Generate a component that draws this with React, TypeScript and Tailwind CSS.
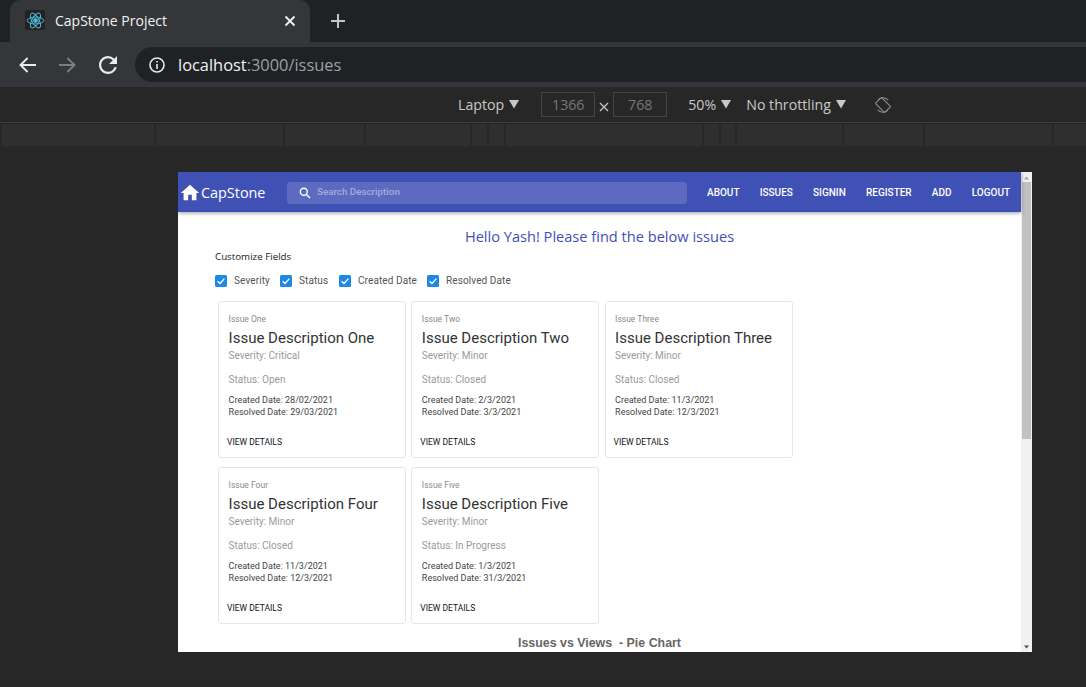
import React from "react";

const roboto = { fontFamily: "Roboto, sans-serif" };

function Cb({ label, w }: { label: string; w: string }) {
  return (
    <div className={`flex items-center ${w}`}>
      <svg width="12" height="12" viewBox="0 0 12 12" className="shrink-0">
        <rect width="12" height="12" rx="1.5" fill="#1e88e5" />
        <path d="M2.6 6.2 L5 8.5 L9.4 3.6" fill="none" stroke="#fff" strokeWidth="1.3" />
      </svg>
      <span className="ml-[7px] text-[10px] leading-[12px] text-[#555] tracking-[0.1px]">{label}</span>
    </div>
  );
}

function Tri({ cls }: { cls: string }) {
  return (
    <svg width="10" height="10" viewBox="0 0 10 10" className={cls}>
      <path d="M0 1 H10 L5 9.5 Z" fill="#c8c8c8" />
    </svg>
  );
}

type Issue = { t: string; d: string; sev: string; st: string; c: string; r: string };

function Card({ i }: { i: Issue }) {
  return (
    <div className="w-[188px] h-[157px] rounded-[3px] border border-[#e6e6e6] bg-white flex flex-col pl-[9.6px] pt-[12px]">
      <div className="text-[8.5px] leading-[11px] text-[#8a8a8a]">{i.t}</div>
      <div className="text-[15px] leading-[20px] mt-[3px] text-[#333]">{i.d}</div>
      <div className="text-[10px] leading-[14px] mt-[1px] text-[#9a9a9a]">{i.sev}</div>
      <div className="text-[10px] leading-[14px] mt-[10px] text-[#9a9a9a]">{i.st}</div>
      <div className="text-[9px] leading-[12px] mt-[7px] text-[#444]">{i.c}</div>
      <div className="text-[9px] leading-[12px] text-[#444]">{i.r}</div>
      <div className="text-[8.5px] leading-[11px] mt-[19px] -ml-[1.6px] font-normal text-[#111]">VIEW DETAILS</div>
    </div>
  );
}

const issues: Issue[] = [
  { t: "Issue One", d: "Issue Description One", sev: "Severity: Critical", st: "Status: Open", c: "Created Date: 28/02/2021", r: "Resolved Date: 29/03/2021" },
  { t: "Issue Two", d: "Issue Description Two", sev: "Severity: Minor", st: "Status: Closed", c: "Created Date: 2/3/2021", r: "Resolved Date: 3/3/2021" },
  { t: "Issue Three", d: "Issue Description Three", sev: "Severity: Minor", st: "Status: Closed", c: "Created Date: 11/3/2021", r: "Resolved Date: 12/3/2021" },
  { t: "Issue Four", d: "Issue Description Four", sev: "Severity: Minor", st: "Status: Closed", c: "Created Date: 11/3/2021", r: "Resolved Date: 12/3/2021" },
  { t: "Issue Five", d: "Issue Description Five", sev: "Severity: Minor", st: "Status: In Progress", c: "Created Date: 1/3/2021", r: "Resolved Date: 31/3/2021" },
];

const rulerWidths = [153, 129, 79, 105, 16, 15, 197, 16, 14, 106, 79, 129, 32];

export default function App() {
  return (
    <div className="w-[1086px] h-[687px] overflow-hidden bg-[#272727] flex flex-col" style={{ fontFamily: "'Open Sans', sans-serif" }}>
      {/* tab strip */}
      <div className="h-[42px] bg-[#202124] flex items-end shrink-0 pl-[10px]">
        <div className="w-[300px] h-[42px] bg-[#35363a] rounded-t-[10px] flex items-center pl-[15px] pr-[13px] pb-[2px]">
          <div className="w-[20px] h-[20px] bg-[#222] rounded-[2px] flex items-center justify-center">
            <svg width="19" height="19" viewBox="-12 -12 24 24" fill="none" stroke="#4fb8d8" strokeWidth="1.2">
              <circle r="2.4" fill="#4fb8d8" />
              <ellipse rx="10.5" ry="4.4" />
              <ellipse rx="10.5" ry="4.4" transform="rotate(60)" />
              <ellipse rx="10.5" ry="4.4" transform="rotate(120)" />
            </svg>
          </div>
          <span className="ml-[10px] text-[14px] text-[#f1f3f4] flex-1">CapStone Project</span>
          <svg width="12" height="12" viewBox="0 0 12 12" stroke="#f1f3f4" strokeWidth="1.8" className="mr-[1px] mt-[2px]">
            <path d="M1.5 1.5 L10.5 10.5 M10.5 1.5 L1.5 10.5" />
          </svg>
        </div>
        <div className="h-[42px] flex items-center ml-[20px]">
          <svg width="16" height="16" viewBox="0 0 16 16" stroke="#c4c7c9" strokeWidth="2">
            <path d="M8 1 V15 M1 8 H15" />
          </svg>
        </div>
      </div>
      {/* toolbar */}
      <div className="h-[45px] bg-[#35363a] flex items-center shrink-0 pl-[19px]">
        <svg width="17" height="16" viewBox="0 0 17 16" fill="none" stroke="#e8eaed" strokeWidth="1.9"><path d="M17 8 H1.5 M8.6 1 L1.5 8 L8.6 15" /></svg>
        <svg width="17" height="16" viewBox="0 0 17 16" fill="none" stroke="#7b7d80" strokeWidth="1.9" className="ml-[23px]"><path d="M0 8 H15.5 M8.4 1 L15.5 8 L8.4 15" /></svg>
        <svg width="18" height="18" viewBox="4 4 16 16" fill="#e8eaed" className="ml-[23px]"><path d="M17.65 6.35A7.958 7.958 0 0 0 12 4c-4.42 0-7.99 3.58-7.99 8s3.57 8 7.99 8c3.73 0 6.84-2.55 7.73-6h-2.08A5.99 5.99 0 0 1 12 18c-3.31 0-6-2.69-6-6s2.69-6 6-6c1.66 0 3.14.69 4.22 1.78L13 11h7V4l-2.35 2.35z" /></svg>
        <div className="ml-[18px] flex-1 h-[35px] rounded-l-full bg-[#202124] flex items-center pl-[14px]">
          <svg width="16" height="16" viewBox="0 0 16 16" fill="none" stroke="#e8eaed" strokeWidth="1.6">
            <circle cx="8" cy="8" r="7" />
            <path d="M8 7 V12 M8 4 V5.6" />
          </svg>
          <span className="ml-[13px] text-[16.4px] pt-[1px]">
            <span className="text-[#f1f3f4]">localhost</span>
            <span className="text-[#9aa0a6]">:3000/issues</span>
          </span>
        </div>
      </div>
      {/* device toolbar */}
      <div className="h-[36px] bg-[#272727] flex items-center shrink-0 border-b border-[#3c3c3c] pl-[458px] text-[14.2px] text-[#c8c8c8]">
        <span>Laptop</span>
        <Tri cls="ml-[5px] mb-[2px]" />
        <div className="ml-[22px] w-[54px] h-[25px] border border-[#444] flex items-center justify-center text-[#777]">1366</div>
        <svg width="10" height="10" viewBox="0 0 10 10" stroke="#c0c0c0" strokeWidth="1.4" className="mx-[4px] mt-[5px]"><path d="M1 1 L9 9 M9 1 L1 9" /></svg>
        <div className="w-[54px] h-[25px] border border-[#444] flex items-center justify-center text-[#777]">768</div>
        <span className="ml-[21px]">50%</span>
        <Tri cls="ml-[5px] mb-[2px]" />
        <span className="ml-[15px]">No throttling</span>
        <Tri cls="ml-[5px] mb-[2px]" />
        <svg width="16" height="16" viewBox="0 0 18 18" fill="none" stroke="#909090" strokeWidth="1.2" className="ml-[29px]">
          <rect x="4.2" y="1.6" width="9.6" height="14.8" rx="1.2" transform="rotate(-45 9 9)" />
          <path d="M3.6 3 A8 8 0 0 1 15 3.6 M14.4 15 A8 8 0 0 1 3 14.4" />
        </svg>
      </div>
      {/* ruler */}
      <div className="h-[24px] bg-[#272727] flex gap-[2px] pl-[2px] pt-[1px] shrink-0">
        {rulerWidths.map((w, k) => (
          <div key={k} className="h-[22px] bg-[#2f2f2f]" style={{ width: w }} />
        ))}
      </div>
      {/* emulated viewport */}
      <div className="ml-[178px] mt-[25px] w-[854px] h-[480px] bg-white flex overflow-hidden shrink-0" style={roboto}>
        <div className="w-[843px] flex flex-col shrink-0">
          <div className="h-[40px] bg-[#3f51b5] shadow-[0_1px_4px_rgba(0,0,0,0.4)] flex items-center shrink-0 relative pt-[1px]">
            <svg width="22" height="22" viewBox="0 0 24 24" fill="#fff" className="ml-[1px]"><path d="M10 20v-6h4v6h5v-8h3L12 3 2 12h3v8z" /></svg>
            <span className="text-[14.4px] text-white w-[86px]" style={{ fontFamily: "'Open Sans', sans-serif" }}>CapStone</span>
            <div className="w-[400px] h-[22px] rounded-[3px] bg-[#5c6bc0] flex items-center pl-[12px]">
              <svg width="12" height="12" viewBox="0 0 12 12" fill="none" stroke="#fff" strokeWidth="1.4">
                <circle cx="4.8" cy="4.8" r="3.5" />
                <path d="M7.4 7.4 L11 11" />
              </svg>
              <span className="ml-[6px] text-[9.8px] font-medium text-[#a4add9]">Search Description</span>
            </div>
            <div className="flex ml-[20px] gap-[20.2px] text-[10px] font-medium text-white">
              <span>ABOUT</span>
              <span>ISSUES</span>
              <span>SIGNIN</span>
              <span>REGISTER</span>
              <span>ADD</span>
              <span>LOGOUT</span>
            </div>
          </div>
          <div className="flex-1 relative pl-[37px]">
            <div className="text-center -ml-[37px] mt-[14px] text-[14.6px] leading-[20px] text-[#3f51b5]" style={{ fontFamily: "'Open Sans', sans-serif" }}>
              Hello Yash! Please find the below issues
            </div>
            <div className="mt-[5px] text-[9.75px] leading-[12px] text-[#222]" style={{ fontFamily: "'Open Sans', sans-serif" }}>Customize Fields</div>
            <div className="flex mt-[12px]">
              <Cb label="Severity" w="w-[65px]" />
              <Cb label="Status" w="w-[59px]" />
              <Cb label="Created Date" w="w-[88px]" />
              <Cb label="Resolved Date" w="w-[100px]" />
            </div>
            <div className="mt-[14px] ml-[3px] grid grid-cols-[188px_188px_188px] gap-x-[5.25px] gap-y-[9px]">
              {issues.map((i) => (
                <Card key={i.t} i={i} />
              ))}
            </div>
            <div className="-ml-[37px] mt-[12px] text-center text-[12.4px] leading-[14px] font-bold text-[#666]" style={{ fontFamily: "'Liberation Sans', sans-serif" }}>
              Issues vs Views&nbsp; - Pie Chart
            </div>
          </div>
        </div>
        <div className="w-[11px] bg-[#f1f1f1] flex flex-col items-center shrink-0">
          <svg width="7" height="6" viewBox="0 0 7 6" className="mt-[3px] shrink-0"><path d="M3.5 1.5 L6 4.5 H1 Z" fill="#a3a3a3" /></svg>
          <div className="w-[9px] h-[257px] mt-[1px] bg-[#c1c1c1] shrink-0" />
          <div className="flex-1" />
          <svg width="7" height="6" viewBox="0 0 7 6" className="mb-[2px] shrink-0"><path d="M3.5 4.5 L6 1.5 H1 Z" fill="#505050" /></svg>
        </div>
      </div>
    </div>
  );
}
